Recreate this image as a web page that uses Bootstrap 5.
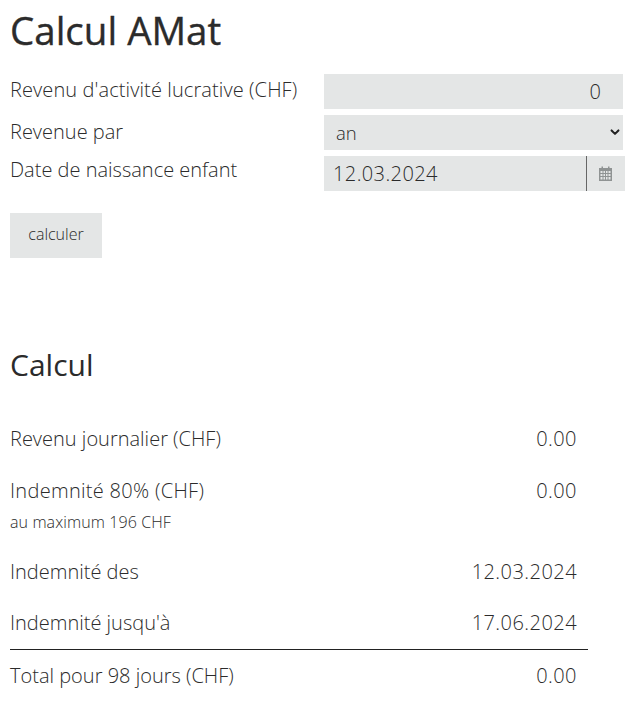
<!doctype html>
<html lang="fr">
<head>
<meta charset="utf-8">
<title>Calcul AMat</title>
<link rel="stylesheet" href="https://cdn.jsdelivr.net/npm/bootstrap@5.3.0/dist/css/bootstrap.min.css">
<style>
body{font-family:"Open Sans","Noto Sans",sans-serif;font-weight:300;color:#2b2b2b;font-size:20px;background:#fff}
.page-wrap{padding:0 0 0 10px;width:625px}
.main-title{font-size:38.500px;font-weight:500;line-height:44px;margin:8px 0 22px;-webkit-text-stroke:.35px #2b2b2b}
.form-line{display:flex;margin-bottom:6px}
.form-line>label{width:314px;flex:none;margin:0;line-height:26px;font-size:20px}
.lab-a{padding-top:3px;letter-spacing:.1px}
.lab-b{padding-top:4px}
.lab-c{padding-top:1px}
.field{width:299px;height:35px;background-color:#e4e6e6;border:0;border-radius:0;font-weight:300;font-size:20px;color:#2b2b2b;box-shadow:none}
.field-num{text-align:right;padding:0 22px 0 0}
.field-sel{font-size:18.500px;padding:0 0 0 12px;background-position:right 1px center;background-size:14px 11px;--bs-form-select-bg-img:url("data:image/svg+xml,%3csvg xmlns='http://www.w3.org/2000/svg' viewBox='0 0 16 16'%3e%3cpath fill='none' stroke='%23222' stroke-linecap='round' stroke-linejoin='round' stroke-width='3' d='m3 5 5 5 5-5'/%3e%3c/svg%3e")}
.date-box{width:301px;height:35px;background:#e4e6e6;display:flex;align-items:stretch}
.date-box .field{width:262px;flex:none;padding:0 0 0 9px;background:transparent;letter-spacing:.4px}
.date-icon{flex:none;width:39px;border-left:1px solid #666;display:flex;align-items:center;justify-content:center;padding-right:2px}
.calc-btn{background:#e4e6e6;border:0;border-radius:0;width:92px;height:45px;margin-top:16px;font-size:16px;font-weight:300;color:#2b2b2b;padding:0 0 3px}
.sub-title{font-size:30px;font-weight:400;line-height:38px;margin:88px 0 42px}
.res-line{display:flex;justify-content:space-between;padding-right:48px;line-height:26px;font-size:20px}
.res-val{letter-spacing:.45px}
.res-pct{letter-spacing:.3px}
.res-gap{margin-bottom:26px}
.res-gap-tight{margin-bottom:25px}
.res-note{font-size:16px;line-height:20px;margin:8px 0 27px;letter-spacing:.1px}
.res-rule{width:578px;border-top:1px solid #222;margin:13px 0 13px}
</style>
</head>
<body>
<div class="page-wrap">
  <h1 class="main-title">Calcul AMat</h1>
  <form>
    <div class="form-line">
      <label for="rev" class="lab-a">Revenu d'activité lucrative (CHF)</label>
      <input id="rev" class="form-control field field-num" value="0">
    </div>
    <div class="form-line">
      <label for="par" class="lab-b">Revenue par</label>
      <select id="par" class="form-select field field-sel"><option>an</option></select>
    </div>
    <div class="form-line">
      <label for="dob" class="lab-c">Date de naissance enfant</label>
      <div class="date-box">
        <input id="dob" class="form-control field" value="12.03.2024">
        <span class="date-icon">
          <svg width="13" height="15" viewBox="0 0 13 15" aria-hidden="true">
            <path fill="#8f9393" d="M0 2h2.500V.5h1.500V2h5V.5h1.500V2H13v13H0z"/>
            <path fill="#e4e6e6" d="M1.500 5H3.500v2H1.500zM4.500 5h1.500v2H4.500zM7 5h1.500v2H7zM9.500 5h2v2h-2zM1.500 8H3.500v2H1.500zM4.500 8h1.500v2H4.500zM7 8h1.500v2H7zM9.500 8h2v2h-2zM1.500 11H3.500v2.500H1.500zM4.500 11h1.500v2.500H4.500zM7 11h1.500v2.500H7zM9.500 11h2v2.500h-2z"/>
          </svg>
        </span>
      </div>
    </div>
    <button type="button" class="btn calc-btn">calculer</button>
  </form>
  <h2 class="sub-title">Calcul</h2>
  <div class="res-line res-gap"><span>Revenu journalier (CHF)</span><span class="res-val">0.00</span></div>
  <div class="res-line"><span class="res-pct">Indemnité 80% (CHF)</span><span class="res-val">0.00</span></div>
  <div class="res-note">au maximum 196 CHF</div>
  <div class="res-line res-gap-tight"><span>Indemnité des</span><span class="res-val">12.03.2024</span></div>
  <div class="res-line"><span>Indemnité jusqu'à</span><span class="res-val">17.06.2024</span></div>
  <div class="res-rule"></div>
  <div class="res-line"><span>Total pour 98 jours (CHF)</span><span class="res-val">0.00</span></div>
</div>
</body>
</html>
